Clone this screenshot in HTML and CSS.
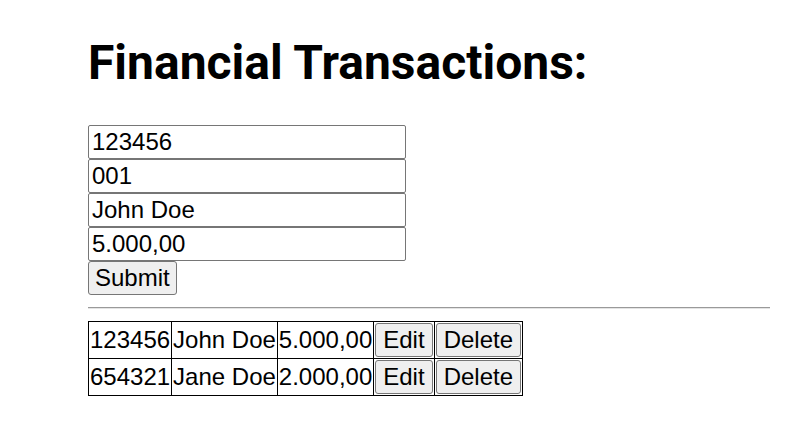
FILE: index.html
```html
<!DOCTYPE html>
<html>
<head>
<meta charset="utf-8">
<link rel="stylesheet" href="styles.css">
</head>
<body>
<div class="page">
  <h1 class="title">Financial Transactions:</h1>
  <form class="entry">
    <input class="field" type="text" value="123456">
    <input class="field" type="text" value="001">
    <input class="field" type="text" value="John Doe">
    <input class="field" type="text" value="5.000,00">
    <button class="btn" type="button">Submit</button>
  </form>
  <hr class="rule">
  <table class="list">
    <tr>
      <td>123456</td><td>John Doe</td><td>5.000,00</td>
      <td><button class="btn cell-btn" type="button">Edit</button></td>
      <td><button class="btn cell-btn" type="button">Delete</button></td>
    </tr>
    <tr>
      <td>654321</td><td>Jane Doe</td><td>2.000,00</td>
      <td><button class="btn cell-btn" type="button">Edit</button></td>
      <td><button class="btn cell-btn" type="button">Delete</button></td>
    </tr>
  </table>
</div>
</body>
</html>
```
FILE: styles.css
```css
html, body {
  margin: 0;
  padding: 0;
  background: #fff;
}
.page {
  padding: 35px 40px 0 88px;
  font-family: "Liberation Sans", Arial, sans-serif;
  font-size: 24px;
  color: #000;
}
.title {
  font-family: Roboto, sans-serif;
  font-weight: 700;
  font-size: 48px;
  line-height: 56px;
  margin: 0 0 34px;
}
.entry {
  display: flex;
  flex-direction: column;
  align-items: flex-start;
  margin: 0;
}
.field {
  box-sizing: border-box;
  width: 318px;
  height: 34px;
  margin: 0;
  padding: 2px 3px;
  border: 1px solid #767676;
  border-radius: 2px;
  font-family: "Liberation Sans", Arial, sans-serif;
  font-size: 24px;
  color: #000;
  background: #fff;
}
.btn {
  box-sizing: border-box;
  height: 34px;
  margin: 0;
  padding: 2px 6px;
  border: 1px solid #767676;
  border-radius: 3px;
  background: #efefef;
  font-family: "Liberation Sans", Arial, sans-serif;
  font-size: 24px;
  line-height: 28px;
  color: #000;
}
.rule {
  margin: 12px 0 12px;
  border: 0;
  border-top: 1px solid #9a9a9a;
  border-bottom: 1px solid #e4e4e4;
  height: 0;
}
.list {
  border-collapse: collapse;
}
.list td {
  border: 1px solid #000;
  padding: 1px;
  line-height: 34px;
  white-space: nowrap;
  vertical-align: middle;
}
.list td .cell-btn {
  display: block;
  padding: 2px 7px;
}
```
